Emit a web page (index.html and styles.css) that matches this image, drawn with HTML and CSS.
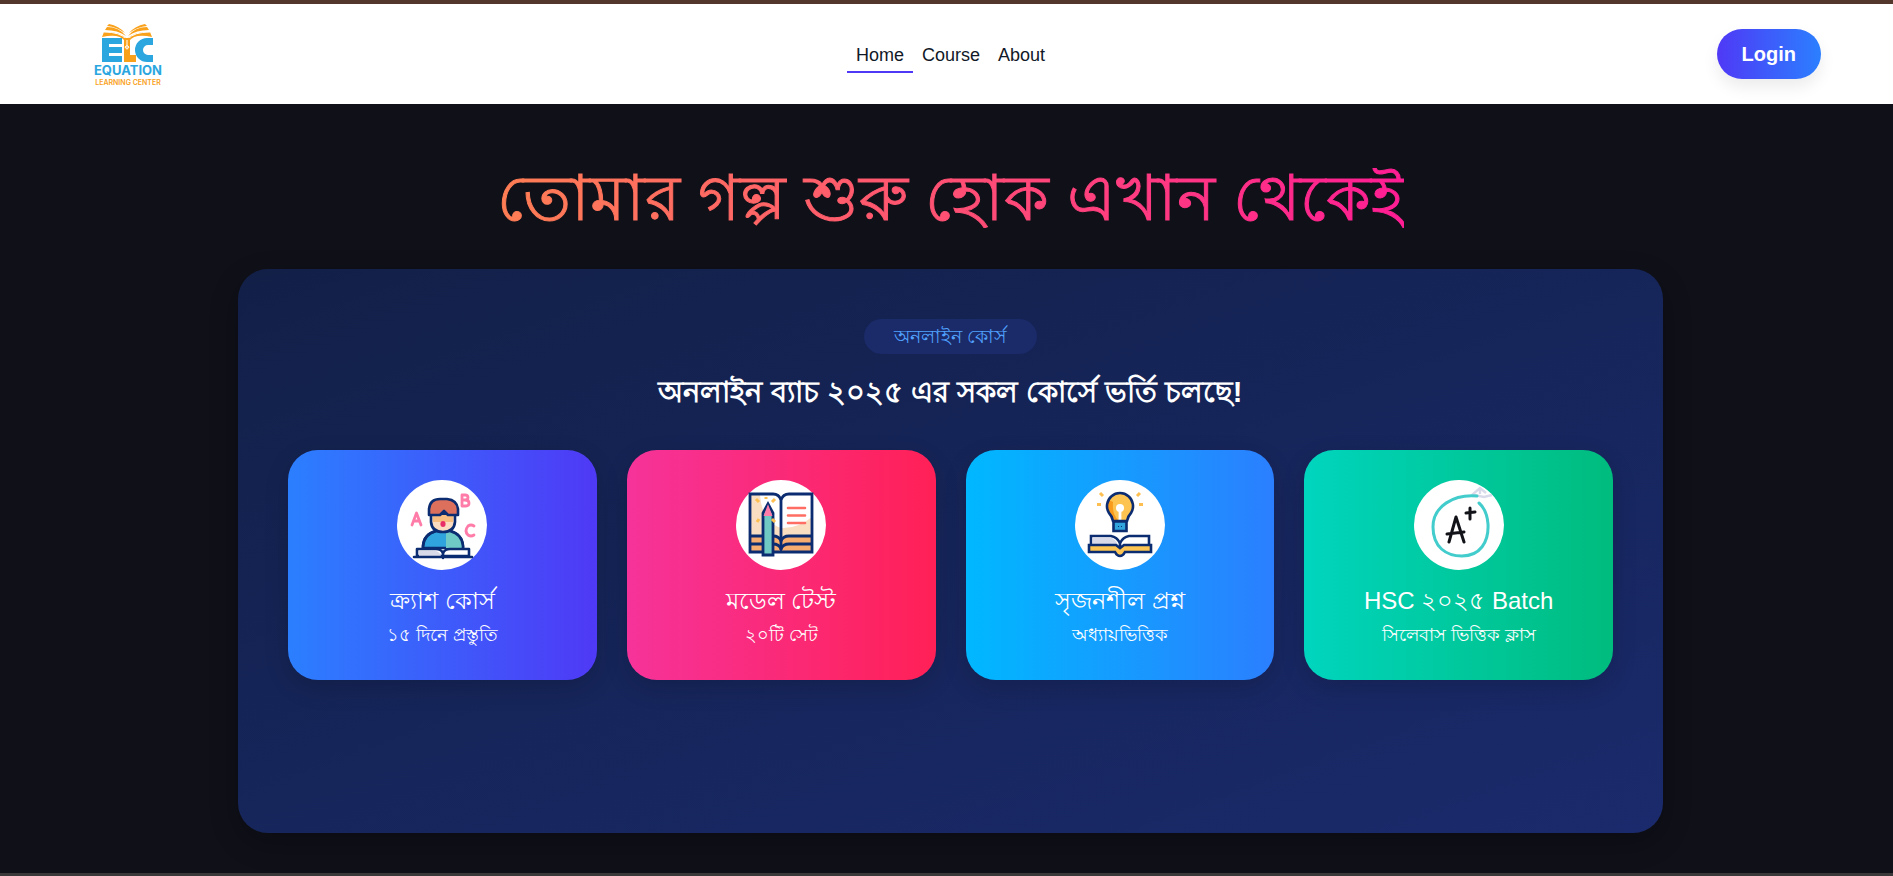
FILE: index.html
```html
<!DOCTYPE html>
<html lang="bn">
<head>
<meta charset="utf-8">
<meta name="viewport" content="width=device-width, initial-scale=1">
<title>Equation Learning Center</title>
<link rel="stylesheet" href="styles.css">
</head>
<body>
<header class="site-header">
  <a class="brand" href="#" aria-label="Equation Learning Center">
    <svg class="brand-logo" viewBox="0 0 78 62" role="img" aria-label="ELC">
      <g fill="#f9a11b">
        <path d="M13 13L15 8Q30 7 38 15Q46 7 61 8L63 13Q46 9 40 17H36Q30 9 13 13Z"/>
        <path d="M16 6L18 3Q30 3 37 12Q29 6 16 6ZM60 6L58 3Q46 3 39 12Q47 6 60 6Z"/>
        <path d="M18 2L20 0Q30 2 36 9Q28 3 18 2ZM58 2L56 0Q46 2 40 9Q48 3 58 2Z"/>
      </g>
      <path d="M15 8Q31 8 37 15M61 8Q45 8 39 15" fill="none" stroke="#fff" stroke-width="1"/>
      <path d="M13 14h20v6H20v3h13v6H20v3h13v6H13z" fill="#2ba6df"/>
      <path d="M35 14h6v17h6v7H35z" fill="#f9a11b"/>
      <path d="M38 16v8m-2-1q2-3 4 0q-2 4-4 0" fill="none" stroke="#fff" stroke-width="1"/>
      <path d="M64 14h-6a12 12 0 0 0 0 24h6v-7h-5a5 5 0 0 1 0-10h5z" fill="#2ba6df"/>
      <text class="logo-name" x="39" y="51" text-anchor="middle">EQUATION</text>
      <text class="logo-sub" x="39" y="61" text-anchor="middle">LEARNING CENTER</text>
    </svg>
  </a>
  <nav class="site-nav" aria-label="Main">
    <a class="nav-link active" href="#">Home</a>
    <a class="nav-link" href="#">Course</a>
    <a class="nav-link" href="#">About</a>
  </nav>
  <div class="header-action"><button class="login" type="button">Login</button></div>
</header>
<main class="hero">
  <h1 class="hero-title">তোমার গল্প শুরু হোক এখান থেকেই</h1>
  <section class="panel">
    <div class="panel-head">
      <span class="pill">অনলাইন কোর্স</span>
      <h2 class="panel-title">অনলাইন ব্যাচ ২০২৫ এর সকল কোর্সে ভর্তি চলছে!</h2>
    </div>
    <div class="cards">
      <a class="card card-blue" href="#">
        <svg class="card-icon" viewBox="0 0 90 90" aria-hidden="true">
          <circle cx="45" cy="45" r="45" fill="#fff"/>
          <g stroke="#0b2c70" stroke-width="2.6" stroke-linejoin="round" stroke-linecap="round">
            <path d="M26 68V66Q27 54 39 51H53Q65 54 66 66V68Z" fill="#30a4dc"/>
            <path d="M49 51h4Q65 54 66 66v2H49z" fill="#6fcac6" stroke="none"/>
            <path d="M26 68V66Q27 54 39 51M53 51Q65 54 66 66V68" fill="none"/>
            <path d="M34 34V42Q35 52 46 52Q57 52 58 42V34Z" fill="#fbdcc0"/>
            <path d="M36 35h20v7H36z" fill="#f8bd80" stroke="none"/>
            <path d="M32 35V29Q33 19 43 19H50Q60 20 61 29V35H51L47 31L43 35Z" fill="#dc705d"/>
            <path d="M20 76V69H39Q44 69 46 73Q48 69 53 69H72V76Z" fill="#fff"/>
            <path d="M22 71h17q4 1 5 5H22z" fill="#d8daea" stroke="none"/>
            <path d="M17 77H75M46 72v6"/>
          </g>
          <ellipse cx="46" cy="44" rx="2.6" ry="3" fill="#e92f68"/>
          <g fill="none" stroke="#ff7ca8" stroke-width="2.8" stroke-linejoin="round" stroke-linecap="round">
            <path d="M15 45L19.500 33L24 45M17 41H22"/>
            <path d="M65 15V26H69Q72 26 72 23Q72 20 68 20H65M68 20Q71 20 71 17.500Q71 15 68 15H65"/>
            <path d="M77 46Q74 44 71 46Q67 51 71 55Q74 57 77 55"/>
          </g>
        </svg>
        <h3 class="card-title">ক্র্যাশ কোর্স</h3>
        <p class="card-text">১৫ দিনে প্রস্তুতি</p>
      </a>
      <a class="card card-pink" href="#">
        <svg class="card-icon" viewBox="0 0 90 90" aria-hidden="true">
          <circle cx="45" cy="45" r="45" fill="#fff"/>
          <path d="M14 15H24Q26 42 45 48Q61 49 76 37V57H14z" fill="#f9dec2"/>
          <path d="M14 57h62v15H14z" fill="#f7ac70"/>
          <g fill="none" stroke="#0b2c70" stroke-width="2.800">
            <path d="M45 20Q43 14 37 14H14V72H76V14H53Q47 14 45 20V70"/>
            <path d="M14 56H37Q43 56 45 61Q47 56 53 56H76M14 64H37Q43 64 45 69Q47 64 53 64H76"/>
          </g>
          <path d="M27 75V33L32 24L37 33V75Z" fill="#70c9c3" stroke="#0b2c70" stroke-width="2.800"/>
          <path d="M29 35L32 27L35 35Z" fill="#ff7ca8" stroke="#ff7ca8" stroke-width="2"/>
          <path d="M52 28H69M52 35.500H69M52 43H69" stroke="#ff6d63" stroke-width="2.600" stroke-linecap="round"/>
          <path d="M20 19L23 22M30 17V19M39 19L36 22M23 39L21 42M36 39L39 42" stroke="#fdbf4f" stroke-width="3"/>
        </svg>
        <h3 class="card-title">মডেল টেস্ট</h3>
        <p class="card-text">২০টি সেট</p>
      </a>
      <a class="card card-sky" href="#">
        <svg class="card-icon" viewBox="0 0 90 90" aria-hidden="true">
          <circle cx="45" cy="45" r="45" fill="#fff"/>
          <path d="M38 41Q37 36 34 33A13 13 0 1 1 56 33Q53 36 52 41Z" fill="#fdc451"/>
          <path d="M38 22Q37 34 43 40H38Q38 36 34 33Q30 26 34 20z" fill="#f99b1c"/>
          <circle cx="45" cy="28" r="4" fill="#fff"/>
          <path d="M45 29V41" stroke="#fff" stroke-width="2.800"/>
          <g fill="none" stroke="#0b2c70" stroke-width="2.600">
            <path d="M38 41Q37 36 34 33A13 13 0 1 1 56 33Q53 36 52 41Z"/>
            <path d="M38.500 41.500H51.500V51H38.500Z" fill="#30a4dc"/>
            <path d="M16 65V56H36Q42 57 45 63Q48 57 54 56H74V65" fill="#fff"/>
            <path d="M17.500 57.500H35Q40 58 43 65H17.500z" fill="#d8daea" stroke="none"/>
            <path d="M14 65H41L45 68L49 65H76V72H50Q48 76 45 76Q42 76 40 72H14Z" fill="#fdc451"/>
            <path d="M45 61v7"/>
          </g>
          <path d="M43 46.500h1M46 46.500h1" stroke="#0b2c70"/>
          <path d="M25 13L28 16M22 24.500H26M65 13L62 16M64 24.500H68" stroke="#fdbf4f" stroke-width="3"/>
        </svg>
        <h3 class="card-title">সৃজনশীল প্রশ্ন</h3>
        <p class="card-text">অধ্যায়ভিত্তিক</p>
      </a>
      <a class="card card-green" href="#">
        <svg class="card-icon" viewBox="0 0 90 90" aria-hidden="true">
          <circle cx="45" cy="45" r="45" fill="#fff"/>
          <path d="M58 15L66 8L72 13M66 8V14M60 15L70 17L78 15" fill="none" stroke="#d8daea" stroke-width="2.400"/>
          <path d="M63 16C40 14 19 26 19 47C19 67 32 76 48 76C66 76 75 62 74 44Q73 30 65 23" fill="none" stroke="#42cccc" stroke-width="3" stroke-linecap="round"/>
          <g fill="none" stroke="#111319" stroke-width="3" stroke-linecap="round" stroke-linejoin="round">
            <path d="M35 62L42 37L50 62M33 54L50 52M56 28V39M52 33L61 32"/>
          </g>
        </svg>
        <h3 class="card-title">HSC ২০২৫ Batch</h3>
        <p class="card-text">সিলেবাস ভিত্তিক ক্লাস</p>
      </a>
    </div>
  </section>
</main>
</body>
</html>
```
FILE: styles.css
```css
* { box-sizing: border-box; }

body {
  margin: 0;
  min-height: 100vh;
  display: flex;
  flex-direction: column;
  background: #0f1018;
  color: #fff;
  font-family: "Liberation Sans", Arial, sans-serif;
}

a { color: inherit; text-decoration: none; }

.site-header {
  display: grid;
  grid-template-columns: 1fr auto 1fr;
  align-items: center;
  height: 104px;
  padding: 0 72px 0 80px;
  border-top: 4px solid #54372c;
  background: #fff;
  color: #111827;
}

.brand { width: 96px; padding: 2px 9px 0; }
.brand-logo { display: block; width: 78px; height: 62px; overflow: visible; }
.logo-name { font: 700 13px "Inter", sans-serif; fill: #2ba6df; }
.logo-sub { font: 600 7px "Inter", sans-serif; fill: #f9a11b; }

.site-nav { display: flex; }
.nav-link {
  padding: 9px 9px 6px;
  border-bottom: 2px solid transparent;
  font-size: 18px;
  line-height: 20px;
}
.nav-link.active { border-color: #4f39f6; }

.header-action { display: flex; justify-content: flex-end; }
.login {
  padding: 13px 25px;
  border: 0;
  border-radius: 25px;
  background: linear-gradient(90deg, #4f39f6, #2b7fff);
  box-shadow: 0 8px 16px rgba(0, 0, 0, 0.08);
  color: #fff;
  font: 700 20px/24px "Liberation Sans", Arial, sans-serif;
}

.hero {
  flex: 1;
  display: flex;
  flex-direction: column;
  align-items: center;
  padding: 64px 230px 40px 238px;
  border-bottom: 3px solid #3a3839;
}

.hero-title {
  margin: 0 0 41px;
  background: linear-gradient(90deg, #ff7e54, #ff6467 30%, #ff1d94);
  background-clip: text;
  color: transparent;
  -webkit-text-stroke: 1px transparent;
  font-size: 64px;
  font-weight: 400;
  line-height: 60px;
  white-space: nowrap;
}

.panel {
  flex: 1;
  width: 100%;
  padding: 50px;
  border-radius: 30px;
  background: linear-gradient(160deg, #122048, #1a2a6c);
  box-shadow: 0 10px 30px rgba(0, 0, 0, 0.2);
}

.panel-head {
  display: flex;
  flex-direction: column;
  align-items: center;
  gap: 16px;
}

.pill {
  padding: 5px 30px;
  border-radius: 18px;
  background: #1b2a68;
  color: #51a2ff;
  font-size: 19px;
  line-height: 25px;
}

.panel-title {
  margin: 0 0 36px;
  font-size: 29px;
  font-weight: 700;
  line-height: 44px;
}

.cards {
  display: grid;
  grid-template-columns: repeat(4, 1fr);
  gap: 30px;
}

.card {
  display: flex;
  flex-direction: column;
  align-items: center;
  padding: 30px 20px 28px;
  border-radius: 30px;
  box-shadow: 0 8px 24px rgba(0, 0, 0, 0.15);
  text-align: center;
}
.card-blue { background: linear-gradient(90deg, #2b7fff, #4f39f6); }
.card-pink { background: linear-gradient(90deg, #f6339a, #ff2056); }
.card-sky { background: linear-gradient(90deg, #00b8ff, #2b7fff); }
.card-green { background: linear-gradient(90deg, #00d5be, #00bc7d); }

.card-icon { width: 90px; height: 90px; }

.card-title {
  margin: 13px 0 0;
  font-size: 24px;
  font-weight: 400;
  line-height: 36px;
}

.card-text {
  margin: 0;
  font-size: 18px;
  line-height: 33px;
}
```
